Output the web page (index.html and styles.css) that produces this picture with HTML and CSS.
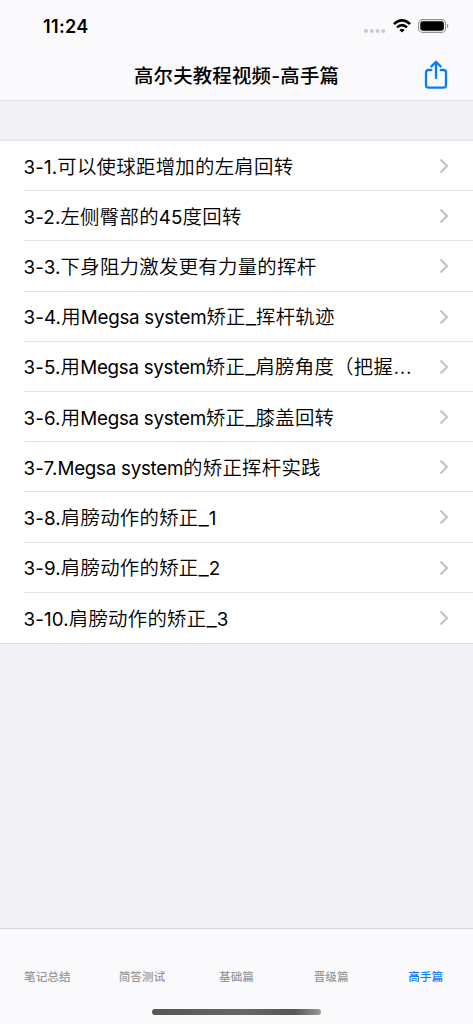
FILE: index.html
```html
<!DOCTYPE html>
<html lang="zh-CN">
<head>
<meta charset="utf-8">
<title>高尔夫教程视频-高手篇</title>
<link rel="stylesheet" href="styles.css">
</head>
<body>
<div class="screen">
  <header class="header">
    <div class="status">
      <span class="time">11:24</span>
      <div class="indicators">
        <svg class="signal" width="22" height="4" viewBox="0 0 22 4" fill="#c9c9cb"><circle cx="2" cy="2" r="2"/><circle cx="7.8" cy="2" r="2"/><circle cx="13.6" cy="2" r="2"/><circle cx="19.4" cy="2" r="2"/></svg>
        <svg class="wifi" width="18" height="14" viewBox="0 0 18 14" fill="none" stroke="#000" stroke-width="2.5"><path d="M.9 5.1Q9-2.3 17.1 5.1"/><path d="M4 8.4Q9 3.8 14 8.4"/><path d="M6.4 10.9Q9 8.5 11.6 10.9L9 13.5Z" fill="#000" stroke="none"/></svg>
        <svg class="battery" width="31" height="14" viewBox="0 0 31 14"><rect x=".6" y=".6" width="27" height="12.8" rx="4" fill="none" stroke="#929295" stroke-width="1.1"/><rect x="2.3" y="2.3" width="23.6" height="9.4" rx="2.4"/><path d="M29 4.8q1.4.8 1.4 2.2T29 9.2z" fill="#929295"/></svg>
      </div>
    </div>
    <div class="navbar">
      <h1 class="title">高尔夫教程视频-高手篇</h1>
      <svg class="share" width="24" height="30" viewBox="0 0 24 30" fill="none" stroke="#087cff" stroke-width="2.3" stroke-linecap="round" stroke-linejoin="round"><path d="M7.3 10H4.5Q2 10 2 12.5V25Q2 27.7 4.7 27.7H19.3Q22 27.7 22 25V12.5Q22 10 19.5 10H16.7"/><path d="M12 18V2M7.4 6.4L12 1.8L16.6 6.4"/></svg>
    </div>
  </header>
  <main class="content">
    <ul class="list">
      <li class="row"><span class="label"><span class="latin number">3-1.</span>可以使球距增加的左肩回转</span><svg class="chevron" viewBox="0 0 10 16"><path d="M1.5 1.5L8 8L1.5 14.5"/></svg></li>
      <li class="row"><span class="label"><span class="latin number">3-2.</span>左侧臀部的<span class="latin number">45</span>度回转</span><svg class="chevron" viewBox="0 0 10 16"><path d="M1.5 1.5L8 8L1.5 14.5"/></svg></li>
      <li class="row"><span class="label"><span class="latin number">3-3.</span>下身阻力激发更有力量的挥杆</span><svg class="chevron" viewBox="0 0 10 16"><path d="M1.5 1.5L8 8L1.5 14.5"/></svg></li>
      <li class="row"><span class="label"><span class="latin number">3-4.</span>用<span class="latin">Megsa system</span>矫正<span class="underscore">_</span>挥杆轨迹</span><svg class="chevron" viewBox="0 0 10 16"><path d="M1.5 1.5L8 8L1.5 14.5"/></svg></li>
      <li class="row"><span class="label"><span class="latin number">3-5.</span>用<span class="latin">Megsa system</span>矫正<span class="underscore">_</span>肩膀角度（把握<span class="ellipsis">…</span></span><svg class="chevron" viewBox="0 0 10 16"><path d="M1.5 1.5L8 8L1.5 14.5"/></svg></li>
      <li class="row"><span class="label"><span class="latin number">3-6.</span>用<span class="latin">Megsa system</span>矫正<span class="underscore">_</span>膝盖回转</span><svg class="chevron" viewBox="0 0 10 16"><path d="M1.5 1.5L8 8L1.5 14.5"/></svg></li>
      <li class="row"><span class="label"><span class="latin number">3-7.</span><span class="latin">Megsa system</span>的矫正挥杆实践</span><svg class="chevron" viewBox="0 0 10 16"><path d="M1.5 1.5L8 8L1.5 14.5"/></svg></li>
      <li class="row"><span class="label"><span class="latin number">3-8.</span>肩膀动作的矫正<span class="underscore">_</span><span class="latin">1</span></span><svg class="chevron" viewBox="0 0 10 16"><path d="M1.5 1.5L8 8L1.5 14.5"/></svg></li>
      <li class="row"><span class="label"><span class="latin number">3-9.</span>肩膀动作的矫正<span class="underscore">_</span><span class="latin">2</span></span><svg class="chevron" viewBox="0 0 10 16"><path d="M1.5 1.5L8 8L1.5 14.5"/></svg></li>
      <li class="row"><span class="label"><span class="latin number">3-10.</span>肩膀动作的矫正<span class="underscore">_</span><span class="latin">3</span></span><svg class="chevron" viewBox="0 0 10 16"><path d="M1.5 1.5L8 8L1.5 14.5"/></svg></li>
    </ul>
  </main>
  <footer class="footer">
    <nav class="tabs">
      <span class="tab">笔记总结</span>
      <span class="tab">简答测试</span>
      <span class="tab">基础篇</span>
      <span class="tab">晋级篇</span>
      <span class="tab active">高手篇</span>
    </nav>
    <div class="home-indicator"></div>
  </footer>
</div>
</body>
</html>
```
FILE: styles.css
```css
* { box-sizing: border-box; }
body {
  margin: 0;
  background: #f2f1f6;
  color: #000;
  font-family: Inter, "Noto Sans CJK SC", sans-serif;
}
.screen {
  display: flex;
  flex-direction: column;
  height: 1024px;
  overflow: hidden;
}
.header {
  height: 101px;
  background: #fafafc;
  border-bottom: 1px solid #dedee1;
}
.status {
  display: flex;
  justify-content: space-between;
  height: 50px;
  padding: 14px 24px 0 43px;
}
.time {
  font-size: 18px;
  font-weight: 600;
  line-height: 25px;
  letter-spacing: .35px;
}
.indicators {
  display: flex;
  align-items: flex-start;
  padding-top: 5px;
}
.signal { margin: 10px 7px 0 0; }
.wifi { margin-right: 7px; }
.navbar {
  display: grid;
  grid-template-columns: 1fr 205px 1fr;
  align-items: center;
  height: 50px;
  padding: 0 25px;
}
.title {
  grid-column: 2;
  margin: 0;
  padding-top: 2px;
  font-size: 19.4px;
  font-weight: 500;
  line-height: 28px;
  letter-spacing: .2px;
  white-space: nowrap;
}
.share { justify-self: end; }
.content {
  flex: 1;
  padding-top: 39px;
}
.list {
  display: grid;
  grid-auto-rows: 50.2px;
  margin: 0;
  padding: 0;
  list-style: none;
  background: #fff;
  border-top: 1px solid #e2e2e5;
  border-bottom: 1px solid #dcdce0;
}
.row {
  display: flex;
  align-items: center;
  justify-content: space-between;
  margin-left: 23.5px;
  padding-right: 24px;
  border-bottom: 1px solid #e4e4e6;
}
.row:last-child { border-bottom: 0; }
.label {
  padding-top: 3px;
  font-size: 19.4px;
  font-weight: 350;
  line-height: 28px;
  letter-spacing: .28px;
  white-space: nowrap;
}
.latin {
  font-size: 18.8px;
  font-weight: 400;
  letter-spacing: -.28px;
}
.number { letter-spacing: .12px; }
.underscore {
  font-size: 23px;
  font-weight: 300;
  line-height: 0;
  letter-spacing: 0;
}
.ellipsis {
  font-size: 22px;
  line-height: 0;
}
.chevron {
  flex: none;
  width: 10px;
  height: 16px;
  margin-top: 1px;
  fill: none;
  stroke: #c4c4c7;
  stroke-width: 2.2;
}
.footer {
  height: 96px;
  background: #fafafc;
  border-top: 1px solid #d6d6da;
}
.tabs {
  display: grid;
  grid-template-columns: repeat(5, 1fr);
  padding-top: 38px;
  height: 80px;
}
.tab {
  color: #98989b;
  font-size: 11.6px;
  font-weight: 500;
  line-height: 20px;
  text-align: center;
}
.active { color: #087cff; }
.home-indicator {
  width: 169px;
  height: 6px;
  margin: 0 auto;
  border-radius: 3px;
  background: linear-gradient(90deg, #565656, #666 55%, #555 84%, #999);
}
```
